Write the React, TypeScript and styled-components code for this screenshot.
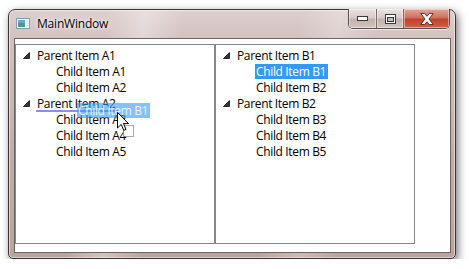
import React from "react";
import styled, { createGlobalStyle } from "styled-components";

const GlobalStyle = createGlobalStyle`
  html, body { margin: 0; padding: 0; background: #ffffff; }
  body { font-family: "Open Sans", "Segoe UI", sans-serif; }
  * { box-sizing: border-box; }
`;

const Window = styled.div`
  position: relative;
  margin: 9px 0 0 8px;
  width: 448px;
  height: 250px;
  border: 1px solid #3c3434;
  border-radius: 7px 7px 5px 5px;
  padding: 0 4px 5px 5px;
  display: flex;
  flex-direction: column;
  background:
    linear-gradient(100deg, rgba(255,255,255,0) 20%, rgba(255,255,255,0.35) 28%, rgba(255,255,255,0) 36%, rgba(255,255,255,0) 60%, rgba(255,255,255,0.25) 68%, rgba(255,255,255,0) 76%),
    linear-gradient(to bottom, #ddd0ce 0px, #d2c2bf 28px, #c3aca7 60%, #bba39d 100%);
  box-shadow: 2px 3px 8px rgba(0, 0, 0, 0.55), 0 0 0 1px rgba(255, 255, 255, 0.5) inset;
`;

const TitleBar = styled.div`
  height: 28px;
  display: flex;
  align-items: flex-start;
`;

const TitleIcon = styled.svg`
  width: 14px;
  height: 11px;
  margin: 8px 0 0 2px;
  flex: none;
`;

const TitleText = styled.span`
  margin: 6px 0 0 7px;
  font-size: 12px;
  line-height: 16px;
  letter-spacing: -0.2px;
  color: #000;
  text-shadow: 0 0 6px rgba(255, 255, 255, 0.95), 0 0 3px rgba(255, 255, 255, 0.9);
`;

const CaptionGroup = styled.div`
  margin: -1px 1px 0 auto;
  display: flex;
  height: 20px;
  border: 1px solid #5a4c4a;
  border-top: none;
  border-radius: 0 0 5px 5px;
  overflow: hidden;
  box-shadow: 0 1px 0 rgba(255, 255, 255, 0.6);
`;

const CaptionButton = styled.div<{ $w: number; $close?: boolean }>`
  width: ${(p) => p.$w}px;
  height: 100%;
  display: flex;
  align-items: center;
  justify-content: center;
  background: ${(p) =>
    p.$close
      ? "linear-gradient(to bottom, #e4a596 0%, #d1705f 45%, #c0422c 55%, #d0624a 100%)"
      : "linear-gradient(to bottom, #eae2e0 0%, #d8ccca 45%, #c2b2ae 55%, #d2c4c0 100%)"};
  box-shadow: inset 0 0 0 1px rgba(255, 255, 255, 0.45);
  & + & {
    border-left: 1px solid #7a6a68;
  }
`;

const Client = styled.div`
  flex: 1;
  border: 1px solid #6e6462;
  background: #ffffff;
  padding-top: 5px;
  display: flex;
  align-items: flex-start;
`;

const TreeView = styled.div`
  position: relative;
  width: 200px;
  height: 200px;
  border: 1px solid #828790;
  padding-top: 2px;
  background: #fff;
  font-size: 12px;
  letter-spacing: -0.35px;
  color: #000;
`;

const Row = styled.div<{ $child?: boolean }>`
  height: 16px;
  display: flex;
  align-items: center;
  padding-left: ${(p) => (p.$child ? 25 : 6)}px;
`;

const Expander = styled.span`
  width: 14px;
  height: 16px;
  flex: none;
  display: flex;
  align-items: center;
`;

const Header = styled.span<{ $selected?: boolean }>`
  display: inline-block;
  height: 15px;
  line-height: 15px;
  padding: 0 2px 0 1px;
  white-space: nowrap;
  background: ${(p) => (p.$selected ? "#3399ff" : "transparent")};
  color: ${(p) => (p.$selected ? "#ffffff" : "#000000")};
`;

const InsertLine = styled.div`
  position: absolute;
  left: 20px;
  top: 65px;
  width: 82px;
  height: 2px;
  background: #8c8cf4;
`;

const DragGhost = styled.div`
  position: absolute;
  left: 61px;
  top: 58px;
  height: 15px;
  line-height: 15px;
  padding: 0 2px 0 1px;
  white-space: nowrap;
  background: rgba(51, 153, 255, 0.6);
  color: rgba(255, 255, 255, 0.85);
`;

const Cursor = styled.svg`
  position: absolute;
  left: 101px;
  top: 67px;
  width: 20px;
  height: 28px;
  overflow: visible;
`;

const Triangle = () => (
  <svg width="7" height="7" viewBox="0 0 7 7" style={{ marginLeft: 1 }}>
    <path d="M6.5 0.5 L6.5 6.5 L0.5 6.5 Z" fill="#3a3a3a" stroke="#262626" strokeWidth="1" strokeLinejoin="miter" />
  </svg>
);

type Item = { label: string; selected?: boolean };
type Group = { label: string; children: Item[] };

const Tree: React.FC<{ groups: Group[]; children?: React.ReactNode }> = ({ groups, children }) => (
  <TreeView>
    {groups.map((g) => (
      <React.Fragment key={g.label}>
        <Row>
          <Expander>
            <Triangle />
          </Expander>
          <Header>{g.label}</Header>
        </Row>
        {g.children.map((c) => (
          <Row key={c.label} $child>
            <Expander />
            <Header $selected={c.selected}>{c.label}</Header>
          </Row>
        ))}
      </React.Fragment>
    ))}
    {children}
  </TreeView>
);

const leftGroups: Group[] = [
  { label: "Parent Item A1", children: [{ label: "Child Item A1" }, { label: "Child Item A2" }] },
  {
    label: "Parent Item A2",
    children: [{ label: "Child Item A3" }, { label: "Child Item A4" }, { label: "Child Item A5" }],
  },
];

const rightGroups: Group[] = [
  { label: "Parent Item B1", children: [{ label: "Child Item B1", selected: true }, { label: "Child Item B2" }] },
  {
    label: "Parent Item B2",
    children: [{ label: "Child Item B3" }, { label: "Child Item B4" }, { label: "Child Item B5" }],
  },
];

export default function App() {
  return (
    <>
      <GlobalStyle />
      <Window>
        <TitleBar>
          <TitleIcon viewBox="0 0 14 11">
            <rect x="0.5" y="0.5" width="13" height="10" fill="#f4f4f4" stroke="#8a9aa8" />
            <rect x="2" y="2" width="7" height="7" fill="#4a9a8a" />
            <rect x="2" y="2" width="7" height="3" fill="#6aa8c8" />
            <rect x="10" y="2" width="2" height="7" fill="#dfe8ee" />
          </TitleIcon>
          <TitleText>MainWindow</TitleText>
          <CaptionGroup>
            <CaptionButton $w={27}>
              <svg width="11" height="5" viewBox="0 0 11 5">
                <rect x="0.5" y="0.5" width="10" height="4" fill="#fff" stroke="#3a3a3a" />
              </svg>
            </CaptionButton>
            <CaptionButton $w={27}>
              <svg width="11" height="10" viewBox="0 0 11 10">
                <rect x="0.5" y="0.5" width="10" height="9" fill="#fff" stroke="#3a3a3a" />
                <rect x="2.5" y="3.5" width="6" height="4" fill="#c8bcba" stroke="#3a3a3a" />
              </svg>
            </CaptionButton>
            <CaptionButton $w={46} $close>
              <svg width="14" height="12" viewBox="0 0 14 12">
                <path
                  d="M0.8 0.5 L4.7 0.5 L7 3.3 L9.3 0.5 L13.2 0.5 L9 6 L13.2 11.5 L9.3 11.5 L7 8.7 L4.7 11.5 L0.8 11.5 L5 6 Z"
                  fill="#ffffff"
                  stroke="#4a2a26"
                  strokeWidth="0.9"
                />
              </svg>
            </CaptionButton>
          </CaptionGroup>
        </TitleBar>
        <Client>
          <Tree groups={leftGroups}>
            <InsertLine />
            <DragGhost>Child Item B1</DragGhost>
            <Cursor viewBox="0 0 20 28">
              <rect x="6.5" y="13.5" width="10" height="11" fill="#fff" stroke="#555" strokeDasharray="1 1" />
              <path
                d="M0.5 0.5 L0.5 16 L4.2 12.4 L6.8 18.4 L9 17.4 L6.5 11.6 L11.5 11.6 Z"
                fill="#ffffff"
                stroke="#000000"
                strokeWidth="1"
                strokeLinejoin="miter"
              />
            </Cursor>
          </Tree>
          <Tree groups={rightGroups} />
        </Client>
      </Window>
    </>
  );
}
